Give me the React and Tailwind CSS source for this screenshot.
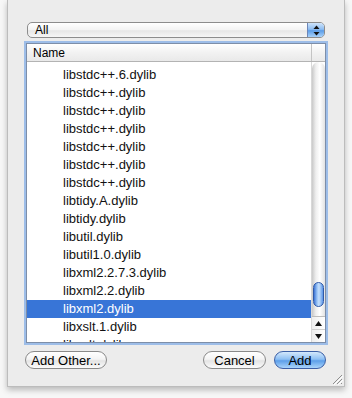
import React from "react";

const rows = [
  "libstdc++.6.dylib",
  "libstdc++.dylib",
  "libstdc++.dylib",
  "libstdc++.dylib",
  "libstdc++.dylib",
  "libstdc++.dylib",
  "libstdc++.dylib",
  "libtidy.A.dylib",
  "libtidy.dylib",
  "libutil.dylib",
  "libutil1.0.dylib",
  "libxml2.2.7.3.dylib",
  "libxml2.2.dylib",
  "libxml2.dylib",
  "libxslt.1.dylib",
  "libxslt.dylib",
];

const selected = 13;

const PillButton = ({ text, width, primary }) => (
  <div
    className={`h-[18px] ${width} rounded-full border flex items-center justify-center text-[13px] leading-none text-black ${
      primary
        ? "border-[#3b5fa6] bg-[linear-gradient(to_bottom,#d3e8fc,#8ec0f4_45%,#5d9fe9_55%,#a9d4fb)]"
        : "border-[#8a8a8a] bg-[linear-gradient(to_bottom,#ffffff,#f4f4f4_45%,#e4e4e4_55%,#fbfbfb)]"
    }`}
  >
    {text}
  </div>
);

const App = () => {
  return (
    <div
      className="w-[352px] h-[398px] bg-[#f7f7f7] px-[7px] overflow-hidden"
      style={{ fontFamily: '"Liberation Sans", Arial, sans-serif' }}
    >
      <div className="relative w-[338px] h-[387px] bg-[#ececec] border-x border-b border-[#bcbcbc] shadow-[0_3px_6px_rgba(0,0,0,0.25)] px-[18px] pt-[22px] flex flex-col">
        {/* popup */}
        <div className="mx-px h-[16px] rounded-[5px] border border-[#8c8c8c] flex overflow-hidden bg-[linear-gradient(to_bottom,#ffffff,#f3f3f3_50%,#e6e6e6_55%,#f6f6f6)]">
          <div className="flex-1 pl-[7px] text-[12px] leading-[14px] text-black">All</div>
          <div className="w-[17px] border-l border-[#6d86b8] flex flex-col items-center justify-center bg-[linear-gradient(to_bottom,#cfe4fb,#8dbdf1_45%,#5c9de8_55%,#a8d2fa)]">
            <svg width="7" height="11" viewBox="0 0 7 11">
              <path d="M3.5 0.5 L6.5 4 L0.5 4 Z" fill="#111" />
              <path d="M3.5 10.5 L6.5 7 L0.5 7 Z" fill="#111" />
            </svg>
          </div>
        </div>

        {/* list */}
        <div className="mt-[5px] h-[300px] border border-[#7d8ea8] shadow-[0_0_0_2px_#9dbde8] bg-white flex flex-col overflow-hidden">
          <div className="h-[18px] flex border-b border-[#b3b3b3] bg-[linear-gradient(to_bottom,#ffffff,#f2f2f2_50%,#e9e9e9)]">
            <div className="flex-1 pl-[6px] text-[12px] leading-[18px] text-black">Name</div>
            <div className="w-[14px] border-l border-[#c4c4c4]" />
          </div>
          <div className="flex-1 flex min-h-0">
            <div className="flex-1 overflow-hidden pt-[4px]">
              {rows.map((name, i) => (
                <div
                  key={i}
                  className={`h-[18px] pl-[36px] text-[13px] leading-[18px] ${
                    i === selected ? "bg-[#3875d7] text-white" : "text-[#111]"
                  }`}
                >
                  {name}
                </div>
              ))}
            </div>
            {/* scrollbar */}
            <div className="w-[14px] flex flex-col border-l border-[#d8d8d8]">
              <div className="flex-1 rounded-t-full bg-[linear-gradient(to_right,#c9c9c9,#efefef_30%,#ffffff_60%,#e2e2e2)] flex flex-col items-center">
                <div className="mt-[220px] w-[11px] h-[25px] rounded-full border border-[#2f59a8] bg-[linear-gradient(to_right,#3d74d4,#9cc6f7_35%,#c6e0fc_55%,#5a94e6)]" />
              </div>
              <div className="h-[13px] border-t border-[#bdbdbd] flex items-center justify-center bg-[linear-gradient(to_right,#eeeeee,#ffffff)]">
                <svg width="7" height="5" viewBox="0 0 7 5">
                  <path d="M3.5 0 L7 5 L0 5 Z" fill="#111" />
                </svg>
              </div>
              <div className="h-[13px] border-t border-[#d0d0d0] flex items-center justify-center bg-[linear-gradient(to_right,#eeeeee,#ffffff)]">
                <svg width="7" height="5" viewBox="0 0 7 5">
                  <path d="M3.5 5 L7 0 L0 0 Z" fill="#111" />
                </svg>
              </div>
            </div>
          </div>
        </div>

        {/* buttons */}
        <div className="mt-[8px] flex items-center -ml-px">
          <PillButton text="Add Other..." width="w-[82px]" />
          <div className="flex-1" />
          <PillButton text="Cancel" width="w-[63px]" />
          <div className="w-[8px]" />
          <PillButton text="Add" width="w-[52px]" primary />
        </div>

        {/* resize grip */}
        <svg
          className="absolute right-[1px] bottom-[1px]"
          width="12"
          height="12"
          viewBox="0 0 12 12"
        >
          <path d="M11 2 L2 11 M11 6 L6 11 M11 10 L10 11" stroke="#8e8e8e" strokeWidth="1" />
          <path d="M12 3 L3 12 M12 7 L7 12" stroke="#ffffff" strokeWidth="1" />
        </svg>
      </div>
    </div>
  );
};

export default App;
